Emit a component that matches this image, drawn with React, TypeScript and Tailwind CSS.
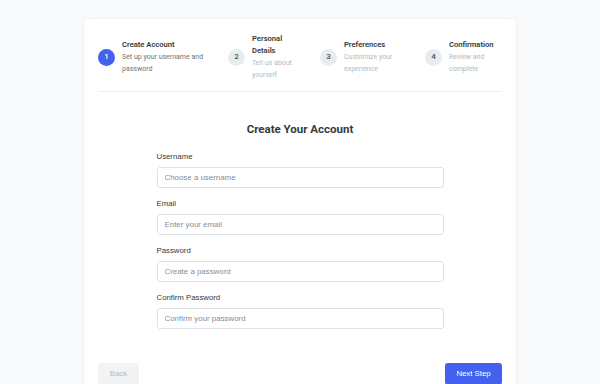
const steps = [
  { n: 1, title: 'Create Account', sub: 'Set up your username and password', w: 'w-[130px]', tw: 'w-[82px]' },
  { n: 2, title: 'Personal Details', sub: 'Tell us about yourself', w: 'w-[92px]', tw: 'w-[44px]' },
  { n: 3, title: 'Preferences', sub: 'Customize your experience', w: 'w-[105px]', tw: 'w-[52px]' },
  { n: 4, title: 'Confirmation', sub: 'Review and complete', w: 'flex-1', tw: 'w-[52px]' },
];

const fields = [
  { label: 'Username', placeholder: 'Choose a username', type: 'text' },
  { label: 'Email', placeholder: 'Enter your email', type: 'email' },
  { label: 'Password', placeholder: 'Create a password', type: 'password' },
  { label: 'Confirm Password', placeholder: 'Confirm your password', type: 'password' },
];

export default function App() {
  const current = 1;

  return (
    <div className="min-h-screen bg-[#f8f9fa] pt-[19px] font-['Roboto',sans-serif]">
      <div className="mx-auto w-[432px] rounded-md bg-white px-[14px] pt-[14px] shadow-[0_1px_4px_rgba(0,0,0,0.06)]">
        {/* stepper */}
        <div className="flex items-center border-b border-[#eef0f2] pb-[10px]">
          {steps.map(s => {
            const active = s.n === current;
            return (
              <div key={s.n} className={`${s.w} flex items-center gap-[7px]`}>
                <div className={`flex h-[17px] w-[17px] shrink-0 items-center justify-center rounded-full text-[8px] font-medium ${active ? 'bg-[#4361ee] text-white' : 'bg-[#e9ecef] text-[#495057]'}`}>
                  {s.n}
                </div>
                <div className={s.tw}>
                  <div className="text-[7.6px] font-semibold leading-[12px] text-[#343a40]">{s.title}</div>
                  <div className={`text-[7px] leading-[12px] ${active ? 'text-[#6c757d]' : 'text-[#b4bac0]'}`}>{s.sub}</div>
                </div>
              </div>
            );
          })}
        </div>

        <h2 className="mt-[29px] text-center text-[11.5px] font-bold leading-[16px] text-[#343a40]">Create Your Account</h2>

        <form className="mx-auto mt-[14px] w-[287px] font-['Liberation_Sans',sans-serif]">
          {fields.map(f => (
            <div key={f.label} className="mb-[10px]">
              <label className="mb-[4px] block text-[7.8px] font-medium leading-[12px] text-[#343a40]">{f.label}</label>
              <input
                type={f.type}
                placeholder={f.placeholder}
                className="block h-[21px] w-full rounded-[3px] border border-[#dee2e6] px-[7px] text-[7.9px] text-[#343a40] placeholder:text-[#868e96] outline-none"
              />
            </div>
          ))}
        </form>

        <div className="mt-[34px] flex items-start justify-between pb-4 font-['Liberation_Sans',sans-serif]">
          <button className="h-[22px] w-[41px] rounded-[3px] bg-[#f1f3f5] text-[7.8px] text-[#b4bac0]">Back</button>
          <button className="h-[22px] w-[57px] rounded-[3px] bg-[#4361ee] text-[7.8px] text-white">Next Step</button>
        </div>
      </div>
    </div>
  );
}
